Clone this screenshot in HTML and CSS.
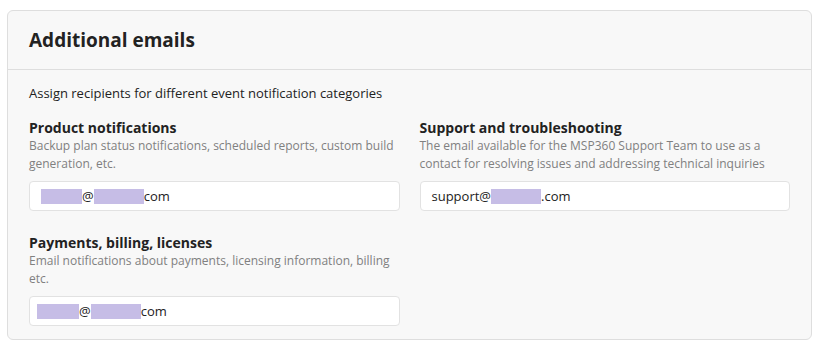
FILE: index.html
```html
<!DOCTYPE html>
<html lang="en">
  <head>
    <meta charset="UTF-8" />
    <title>Additional emails</title>
    <link rel="stylesheet" href="styles.css">
  </head>
  <body>
    <section class="card">
      <header class="card-header">
        <h2>Additional emails</h2>
      </header>
      <div class="card-body">
        <p class="intro">Assign recipients for different event notification categories</p>
        <div class="grid">
          <div class="item">
            <div class="item-title">Product notifications</div>
            <div class="item-desc">Backup plan status notifications, scheduled reports, custom build generation, etc.</div>
            <div class="field"><span class="mask w41"></span>@<span class="mask w50"></span>com</div>
          </div>
          <div class="item">
            <div class="item-title">Support and troubleshooting</div>
            <div class="item-desc">The email available for the MSP360 Support Team to use as a contact for resolving issues and addressing technical inquiries</div>
            <div class="field">support@<span class="mask w50"></span>.com</div>
          </div>
          <div class="item">
            <div class="item-title">Payments, billing, licenses</div>
            <div class="item-desc">Email notifications about payments, licensing information, billing etc.</div>
            <div class="field field-tight"><span class="mask w42"></span>@<span class="mask w50"></span>com</div>
          </div>
        </div>
      </div>
    </section>
  </body>
</html>
```

FILE: styles.css
```css
body {
  margin: 0;
  padding: 10px 6px 10px 7px;
  font-family: "Open Sans", "Noto Sans", sans-serif;
  color: #222;
  background: #fff;
}
.card {
  border: 1px solid #dedede;
  border-radius: 6px;
  background: #f8f8f8;
}
.card-header {
  height: 58px;
  display: flex;
  align-items: center;
  padding: 0 21px;
  border-bottom: 1px solid #dedede;
}
.card-header h2 {
  margin: 0;
  font-size: 19px;
  font-weight: 700;
  color: #222;
}
.card-body {
  padding: 14px 21px 13px;
}
.intro {
  margin: 0 0 16px;
  font-size: 13px;
  line-height: 18px;
  color: #222;
}
.grid {
  display: grid;
  grid-template-columns: 1fr 1fr;
  column-gap: 20px;
  row-gap: 22px;
}
.item-title {
  font-size: 14px;
  font-weight: 700;
  line-height: 19px;
  color: #222;
}
.item-desc {
  font-size: 12px;
  line-height: 18px;
  color: #808080;
}
.field {
  margin-top: 8px;
  height: 28px;
  display: flex;
  align-items: center;
  padding: 0 11px;
  background: #fff;
  border: 1px solid #e2e2e2;
  border-radius: 4px;
  font-size: 13px;
  color: #222;
}
.field-tight {
  padding-left: 7px;
}
.mask {
  display: inline-block;
  height: 15px;
  background: #c6bde6;
}
.w41 { width: 41px; }
.w42 { width: 42px; }
.w50 { width: 50px; }
```
